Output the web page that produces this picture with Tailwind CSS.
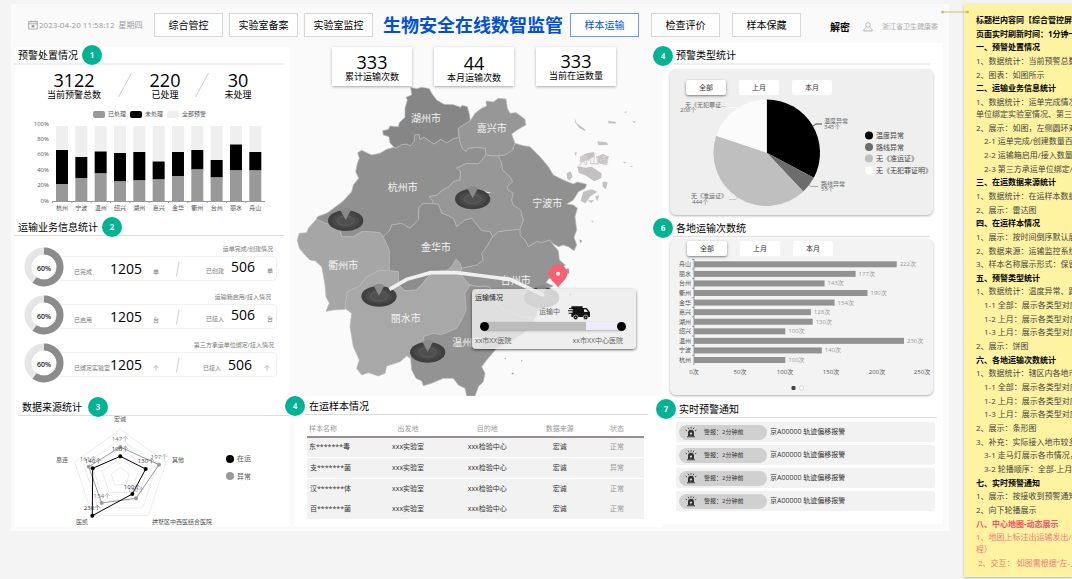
<!DOCTYPE html>
<html lang="zh-CN">
<head>
    <meta charset="UTF-8">
    <meta name="viewport" content="width=device-width, initial-scale=1.0">
    <title>生物安全在线数智监管</title>
    <script src="https://cdn.jsdelivr.net/npm/@tailwindcss/browser@4"></script>
    <style>
        body {
            font-family: 'Open Sans', 'Noto Sans CJK SC', sans-serif;
        }
        svg text {
            dominant-baseline: central;
        }
    </style>
</head>
<body class="bg-[#f4f4f4] flex items-start min-h-screen pl-[11px] pt-1 text-black overflow-hidden">

    <main class="relative flex-1 min-w-0 bg-[#fafafa] pb-1">

        <!-- Header -->
        <header class="flex items-center h-[39px] pt-[3px] pl-[17px] pr-[11px] text-[10px] leading-3 whitespace-nowrap">
            <div class="flex items-center w-[126px] text-[8px] text-[#999]">
                <svg class="w-[10px] h-[10px] mr-px" viewBox="0 0 20 20" fill="none" stroke="#999" stroke-width="1.6">
                    <rect x="1.5" y="3" width="17" height="15" />
                    <path d="M1.5 7.5h17M6 1v4M14 1v4" />
                    <rect x="8" y="11" width="4" height="3" fill="#999" />
                </svg>
                <span>2023-04-20 11:58:12</span>
                <span class="ml-1">星期四</span>
            </div>
            <nav class="flex gap-[6px]">
                <button class="w-[69px] h-6 bg-white border border-[#d7d7d7]">综合管控</button>
                <button class="w-[69px] h-6 bg-white border border-[#d7d7d7]">实验室备案</button>
                <button class="w-[69px] h-6 bg-white border border-[#d7d7d7]">实验室监控</button>
            </nav>
            <h1 class="ml-[10px] text-[18px] leading-6 font-bold text-[#0050d8]">生物安全在线数智监管</h1>
            <nav class="flex gap-3 ml-[7px]">
                <button class="w-[69px] h-6 bg-white border border-[#6f9bee] text-[#0050d8]">样本运输</button>
                <button class="w-[69px] h-6 bg-white border border-[#d7d7d7]">检查评价</button>
                <button class="w-[69px] h-6 bg-white border border-[#d7d7d7]">样本保藏</button>
            </nav>
            <a href="#" class="ml-auto pt-1 font-bold">解密</a>
            <svg class="w-[10px] h-[10px] mt-1 ml-[13px]" viewBox="0 0 20 20" fill="none" stroke="#aaa" stroke-width="1.6">
                <circle cx="10" cy="6" r="4.6" />
                <path d="M6.5 11.5c-3 1-5 3-5 6.500h17c0-3.500-2-5.500-5-6.500" />
            </svg>
            <span class="ml-[9px] pt-1 text-[7px] text-[#aaa]">浙江省卫生健康委</span>
        </header>

        <div class="grid grid-cols-[279px_minmax(0,1fr)_297px]">

            <!-- Left column -->
            <div class="bg-white ml-[3px] mt-1">
                <section>
                    <h2 class="flex items-center h-[18px] ml-0 mr-[6px] pl-1 border-b-2 border-[#efefef] text-[10px] leading-3">
                        预警处置情况
                        <span class="grid place-items-center shrink-0 w-5 h-5 ml-1 rounded-full bg-[#00b392] text-white text-[8px] font-bold">1</span>
                    </h2>
                    <div class="flex items-center h-[39px] pt-px pl-[33px] text-center text-[9px] leading-[11px]">
                        <p class="w-[54px]"><b class="block text-[18px] leading-[18px] font-normal">3122</b>当前预警总数</p>
                        <svg class="w-[14px] h-[26px] ml-[17px]" viewBox="0 0 14 26" stroke="#ccc"><path d="M0.500 25L13.500 1" /></svg>
                        <p class="w-[36px] ml-[15px]"><b class="block text-[18px] leading-[18px] font-normal">220</b>已处理</p>
                        <svg class="w-[14px] h-[26px] ml-[12px]" viewBox="0 0 14 26" stroke="#ccc"><path d="M0.500 25L13.500 1" /></svg>
                        <p class="w-[36px] ml-[11px]"><b class="block text-[18px] leading-[18px] font-normal">30</b>未处理</p>
                    </div>
                    <svg class="block w-full" viewBox="14 104 276 110" font-size="6" fill="#555">
                        <rect x="93" y="111" width="12" height="7" rx="2" fill="#999" />
                        <text x="108" y="114">已处理</text>
                        <rect x="130" y="111" width="12" height="7" rx="2" fill="#000" />
                        <text x="145" y="114">未处理</text>
                        <rect x="167" y="111" width="12" height="7" rx="2" fill="#efefef" />
                        <text x="182" y="114">全部预警</text>
                        <g text-anchor="end">
                            <text x="49" y="124">100%</text>
                            <text x="49" y="139">80%</text>
                            <text x="49" y="154">60%</text>
                            <text x="49" y="170">40%</text>
                            <text x="49" y="185">20%</text>
                            <text x="49" y="201">0%</text>
                        </g>
                        <g id="stack-chart" text-anchor="middle"></g>
                        <path d="M52 201.500H265" stroke="#999" />
                    </svg>
                </section>

                <section class="mt-1">
                    <h2 class="flex items-center h-[18px] mr-[6px] pl-1 border-b border-[#ddd] text-[10px] leading-3">
                        运输业务信息统计
                        <span class="grid place-items-center shrink-0 w-5 h-5 ml-1 rounded-full bg-[#00b392] text-white text-[8px] font-bold">2</span>
                    </h2>
                    <ul class="pt-[7px] pl-[10px] pr-[13px] text-[6px] leading-3 text-[#777] whitespace-nowrap">
                        <li class="flex h-12">
                            <svg class="relative shrink-0 w-10 h-10 mt-1" viewBox="0 0 40 40" fill="none">
                                <circle cx="20" cy="20" r="16" fill="#fff" stroke="#e6e6e6" stroke-width="7" />
                                <circle cx="20" cy="20" r="16" stroke="#8c8c8c" stroke-width="7" pathLength="100" stroke-dasharray="60 40" transform="rotate(-90 20 20)" />
                                <text x="20" y="21" font-size="7" font-weight="600" fill="#222" text-anchor="middle">60%</text>
                            </svg>
                            <div class="flex-1 -ml-2">
                                <p class="text-right pr-1">运单完成/创建情况</p>
                                <div class="grid grid-cols-[36px_43px_23px_30px_25px_36px_1fr] items-center h-[25px] mt-px pl-[17px] border border-[#f0f0f0] rounded">
                                    <span class="pt-[6px]">已完成</span><b class="text-[14px] font-normal text-black">1205</b><span class="pt-[6px]">单</span>
                                    <svg class="w-1 h-4" viewBox="0 0 4 16" stroke="#ccc"><path d="M0.500 15.500L3 0.500" /></svg>
                                    <span class="pt-1">已创建</span><b class="pb-[3px] text-[14px] font-normal text-black">506</b><span class="pt-1">单</span>
                                </div>
                            </div>
                        </li>
                        <li class="flex h-12">
                            <svg class="relative shrink-0 w-10 h-10 mt-1" viewBox="0 0 40 40" fill="none">
                                <circle cx="20" cy="20" r="16" fill="#fff" stroke="#e6e6e6" stroke-width="7" />
                                <circle cx="20" cy="20" r="16" stroke="#8c8c8c" stroke-width="7" pathLength="100" stroke-dasharray="60 40" transform="rotate(-90 20 20)" />
                                <text x="20" y="21" font-size="7" font-weight="600" fill="#222" text-anchor="middle">60%</text>
                            </svg>
                            <div class="flex-1 -ml-2">
                                <p class="text-right pr-[6px]">运输箱启用/接入情况</p>
                                <div class="grid grid-cols-[36px_43px_23px_30px_25px_36px_1fr] items-center h-[25px] mt-px pl-[17px] border border-[#f0f0f0] rounded">
                                    <span class="pt-[6px]">已启用</span><b class="text-[14px] font-normal text-black">1205</b><span class="pt-[6px]">台</span>
                                    <svg class="w-1 h-4" viewBox="0 0 4 16" stroke="#ccc"><path d="M0.500 15.500L3 0.500" /></svg>
                                    <span class="pt-1">已接入</span><b class="pb-[3px] text-[14px] font-normal text-black">506</b><span class="pt-1">台</span>
                                </div>
                            </div>
                        </li>
                        <li class="flex h-12">
                            <svg class="relative shrink-0 w-10 h-10 mt-1" viewBox="0 0 40 40" fill="none">
                                <circle cx="20" cy="20" r="16" fill="#fff" stroke="#e6e6e6" stroke-width="7" />
                                <circle cx="20" cy="20" r="16" stroke="#8c8c8c" stroke-width="7" pathLength="100" stroke-dasharray="60 40" transform="rotate(-90 20 20)" />
                                <text x="20" y="21" font-size="7" font-weight="600" fill="#222" text-anchor="middle">60%</text>
                            </svg>
                            <div class="flex-1 -ml-2">
                                <p class="text-right pr-[3px]">第三方承运单位绑定/接入情况</p>
                                <div class="grid grid-cols-[36px_43px_23px_27px_25px_36px_1fr] items-center h-[25px] mt-px pl-[17px] border border-[#f0f0f0] rounded">
                                    <span class="pt-[6px]">已绑定实验室</span><b class="text-[14px] font-normal text-black">1205</b><span class="pt-[6px]">个</span>
                                    <svg class="w-1 h-4" viewBox="0 0 4 16" stroke="#ccc"><path d="M0.500 15.500L3 0.500" /></svg>
                                    <span class="pt-[6px]">已接入</span><b class="text-[14px] font-normal text-black">506</b><span class="pt-[6px]">个</span>
                                </div>
                            </div>
                        </li>
                    </ul>
                </section>

                <section class="mt-[11px]">
                    <h2 class="flex items-center h-[18px] ml-1 pl-1 border-b border-[#ddd] text-[10px] leading-3">
                        数据来源统计
                        <span class="grid place-items-center shrink-0 w-5 h-5 ml-[6px] rounded-full bg-[#00b392] text-white text-[8px] font-bold">3</span>
                    </h2>
                    <svg class="block w-full" viewBox="14 416 276 109" font-size="6" fill="#555" text-anchor="middle">
                        <g id="radar-grid" fill="none" stroke="#ededed"></g>
                        <path d="M120.300 447L159 464.700L136 498.300L101.700 503L88.700 466.700Z" fill="none" stroke="#999" />
                        <path d="M120.300 456.300L145.700 469L132.300 494L92.300 515.700L92.700 468.300Z" fill="none" stroke="#000" />
                        <g fill="#999">
                            <circle cx="120.300" cy="447" r="2" /><circle cx="159" cy="464.700" r="2" /><circle cx="136" cy="498.300" r="2" /><circle cx="101.700" cy="503" r="2" /><circle cx="88.700" cy="466.700" r="2" />
                        </g>
                        <g fill="#777">
                            <text x="120" y="439">147个</text><text x="159" y="457">197个</text><text x="136" y="490">130个</text><text x="102" y="496">154个</text><text x="88" y="459">161个</text>
                        </g>
                        <g fill="#000">
                            <circle cx="120.300" cy="456.300" r="2" /><circle cx="145.700" cy="469" r="2" /><circle cx="132.300" cy="494" r="2" /><circle cx="92.300" cy="515.700" r="2" /><circle cx="92.700" cy="468.300" r="2" />
                        </g>
                        <g fill="#333">
                            <text x="120" y="449">100个</text><text x="146" y="461">130个</text><text x="132" y="487">100个</text><text x="92" y="508">230个</text><text x="93" y="461">140个</text>
                        </g>
                        <text x="120" y="419">宏诚</text>
                        <text x="178" y="460">其他</text>
                        <text x="62" y="460">易连</text>
                        <text x="82" y="522">医凯</text>
                        <text x="182" y="522">拱墅区中西医结合医院</text>
                        <g font-size="7" text-anchor="start">
                            <circle cx="230" cy="459" r="4" fill="#000" /><text x="237" y="458">在运</text>
                            <circle cx="230" cy="476" r="4" fill="#999" /><text x="237" y="476">异常</text>
                        </g>
                    </svg>
                </section>
            </div>

            <!-- Center column -->
            <div class="flex flex-col">
                <div class="relative flex gap-[22px] h-[43px] pt-1 pl-[42px] text-center text-[9px] leading-3">
                    <p class="w-20 pt-[6px] bg-white shadow-sm shadow-black/25"><b class="block text-[18px] leading-[18px] font-normal">333</b>累计运输次数</p>
                    <p class="w-20 pt-[7px] bg-white shadow-sm shadow-black/25"><b class="block text-[18px] leading-[18px] font-normal">44</b>本月运输次数</p>
                    <p class="w-20 pt-[5px] bg-white shadow-sm shadow-black/25"><b class="block text-[18px] leading-[18px] font-normal">333</b>当前在运数量</p>
                </div>

                <div class="relative">
                    <svg class="block w-full" viewBox="0 258 1086 930">
                        <g stroke="#b8b8b8" stroke-width="2" stroke-linejoin="round">
                            <!-- 杭州 -->
                            <path fill="#909090" d="M312 442L318 444L334 434L350 432L361 437L372 426L374 404L388 404L390 418L402 412L415 420L432 432L452 418L470 428L490 416L508 412L510 425L515 442L527 455L535 445L560 442L586 445L588 464L578 478L565 492L530 490L500 504L512 515L510 540L490 545L478 560L455 572L442 585L418 590L430 605L425 612L400 610L387 622L385 635L385 660L360 685L335 670L305 675L300 690L280 710L270 698L235 695L215 695L190 710L155 710L150 690L130 675L105 670L80 657L82 650L110 640L125 629L160 603L185 575L190 555L206 535L197 515L202 490L208 475L203 458L215 451L230 458L245 465L270 460L290 448Z" />
                            <!-- 湖州 -->
                            <path fill="#868686" d="M362 262L380 266L395 262L418 266L425 280L440 300L462 313L490 314L512 322L516 316L532 320L538 342L541 362L520 375L505 385L506 402L508 412L490 416L470 428L452 418L432 432L415 420L402 412L390 418L388 404L374 404L372 426L361 437L350 432L334 434L318 444L312 442L300 428L297 410L280 405L278 392L295 388L300 378L325 380L328 368L345 352L345 325L352 300L348 292L365 285Z" />
                            <!-- 嘉兴 -->
                            <path fill="#979797" d="M541 362L555 340L575 325L590 318L588 303L610 306L625 295L648 297L652 325L660 340L678 338L705 358L707 375L685 388L665 402L675 430L668 450L645 465L625 468L605 468L588 464L586 445L560 442L535 445L527 455L515 442L510 425L506 402L505 385L520 375Z" />
                            <!-- 绍兴 -->
                            <path fill="#979797" d="M588 464L605 468L625 468L635 490L638 510L660 530L668 545L652 560L655 570L670 580L665 600L670 615L692 630L700 660L690 688L650 692L625 695L608 710L600 695L575 692L565 680L545 655L525 660L500 680L490 655L470 645L455 640L445 612L425 612L430 605L418 590L442 585L455 572L478 560L490 545L510 540L512 515L500 504L530 490L565 492L578 478Z" />
                            <!-- 宁波 -->
                            <path fill="#909090" d="M675 430L700 437L720 440L750 470L775 500L790 525L820 540L850 552L862 546L890 553L885 565L865 575L850 600L830 612L850 615L862 625L855 650L860 690L852 712L860 735L852 752L835 740L820 735L805 740L785 728L780 720L755 728L740 725L715 740L705 720L690 705L690 688L700 660L692 630L670 615L665 600L670 580L655 570L652 560L668 545L660 530L638 510L635 490L625 468L645 465L668 450Z" />
                            <!-- 衢州 -->
                            <path fill="#a6a6a6" d="M80 657L105 670L130 675L150 690L155 710L190 710L215 695L235 695L270 698L280 710L298 750L298 812L265 812L225 835L210 858L172 875L168 900L165 928L130 930L108 934L118 910L108 890L105 855L100 825L95 800L75 782L60 780L45 765L28 745L22 720L28 700L50 698L55 685Z" />
                            <!-- 金华 -->
                            <path fill="#8d8d8d" d="M400 610L445 612L455 640L470 645L490 655L500 680L525 660L545 655L565 680L575 692L600 695L608 710L590 740L575 760L580 780L560 795L515 805L510 790L498 778L485 800L470 812L430 815L410 835L395 855L378 870L345 872L325 855L325 815L298 812L298 750L280 710L300 690L305 675L335 670L360 685L385 660L387 622Z" />
                            <!-- 台州 -->
                            <path fill="#949494" d="M608 710L625 695L650 692L690 688L690 705L705 720L715 740L740 725L755 728L780 720L790 735L805 752L808 780L826 795L812 808L800 822L775 838L768 848L790 858L765 870L750 900L745 930L735 955L700 950L640 930L612 900L600 862L585 858L565 860L540 855L525 840L510 820L515 805L560 795L580 780L575 760L590 740Z" />
                            <!-- 丽水 -->
                            <path fill="#a8a8a8" d="M298 812L325 815L325 855L345 872L378 870L395 855L410 835L430 815L470 812L485 800L498 778L510 790L515 805L510 820L525 840L540 855L525 880L528 930L515 960L500 985L455 1004L430 1000L400 1010L405 1035L375 1045L365 1060L362 1075L350 1068L330 1085L290 1098L285 1120L265 1128L235 1118L215 1125L200 1105L208 1080L190 1040L185 1010L180 980L185 940L165 925L168 900L172 875L210 858L225 835L265 812Z" />
                            <!-- 温州 -->
                            <path fill="#939393" d="M540 855L565 860L585 858L600 862L612 900L640 930L700 950L735 955L720 975L700 1000L660 1025L620 1045L590 1080L575 1100L585 1120L580 1145L565 1160L555 1188L530 1188L525 1165L505 1155L490 1135L460 1135L425 1150L400 1157L395 1143L378 1135L365 1110L362 1075L365 1060L375 1045L405 1035L400 1010L430 1000L455 1004L500 985L515 960L528 930L525 880Z" />
                        </g>
                        <!-- 舟山 -->
                        <g fill="#c2c2c2">
                            <path d="M853 350L860 370L885 388L887 394L868 384L856 368Z" />
                            <path d="M955 362L978 366L976 371L955 370ZM1002 336L1010 334L1008 340ZM1028 362L1040 366L1030 368ZM922 424L950 427L955 434L926 436ZM853 458L860 456L858 468ZM870 470L890 460L912 456L915 468L900 478L872 488ZM918 470L940 462L956 470L950 495L925 490ZM830 520L842 514L848 530L838 542L831 534ZM862 498L885 503L905 500L935 520L934 534L912 544L890 528L866 518ZM938 545L953 546L948 568L938 560ZM880 575L905 568L922 575L900 590L886 610L872 602ZM915 590L928 585L922 604ZM1000 484L1010 488L1002 490ZM1020 498L1028 497L1026 502ZM892 600L912 601L904 609ZM904 662L911 662L907 668Z" />
                            <path fill="#999" d="M868 718L876 722L872 730ZM822 810L836 805L838 820L826 824ZM838 878L845 882L840 892ZM664 1119L672 1118L668 1124ZM643 1075L648 1073L647 1078ZM694 1080L698 1082L694 1085Z" />
                        </g>
                        <g font-size="30" fill="#f2f2f2" text-anchor="middle">
                            <text x="408" y="353">湖州市</text>
                            <text x="605" y="383">嘉兴市</text>
                            <text x="338" y="562">杭州市</text>
                            <text x="557" y="588">绍兴市</text>
                            <text x="772" y="609">宁波市</text>
                            <text x="438" y="742">金华市</text>
                            <text x="160" y="796">衢州市</text>
                            <text x="677" y="839">台州市</text>
                            <text x="347" y="954">丽水市</text>
                            <text x="532" y="1026">温州市</text>
                            <text x="912" y="480" fill="#e6dede" stroke="#d0c8c8">舟山市</text>
                        </g>
                        <defs>
                            <g id="spot">
                                <ellipse rx="53" ry="31" fill="#404040" />
                                <ellipse rx="40" ry="22" fill="#4a4a4a" />
                                <ellipse rx="26" ry="14" fill="#505050" stroke="#666" stroke-width="2" />
                                <path d="M-16 -32Q0 -44 16 -32L0 -2Z" fill="#8a8a8a" />
                            </g>
                        </defs>
                        <use href="#spot" x="548" y="597" />
                        <use href="#spot" x="167" y="662" />
                        <use href="#spot" x="267" y="889" />
                        <use href="#spot" x="413" y="1057" />
                        <use href="#spot" x="755" y="893" />
                        <path d="M298 868L350 838L422 818L500 818L580 828L660 838L762 886" fill="none" stroke="#f0f0f0" stroke-width="11" />
                    </svg>

                    <!-- Transport popup, pinned on the map -->
                    <div class="absolute left-[182px] top-[203px] w-[164px] h-[60px] px-[3px] pt-[3px] rounded bg-[#ececec]/85 shadow shadow-black/50 text-[7px] leading-3 text-[#666]">
                        <p class="text-[#222]">运输情况</p>
                        <div class="flex items-center h-4 pl-16">
                            运输中
                            <svg class="w-[23px] h-[15px] ml-2" viewBox="0 0 69 45">
                                <path d="M10 4H44V9H56L66 22V36H10V26H2V23H14V19H0V16H14V12H3V9H10Z" fill="#111" />
                                <path d="M48 13H54L60 21H48Z" fill="#e4e4e4" />
                                <circle cx="23" cy="37" r="7" fill="#111" stroke="#e4e4e4" stroke-width="2" />
                                <circle cx="53" cy="37" r="7" fill="#111" stroke="#e4e4e4" stroke-width="2" />
                                <circle cx="23" cy="37" r="2" fill="#e4e4e4" /><circle cx="53" cy="37" r="2" fill="#e4e4e4" />
                            </svg>
                        </div>
                        <div class="flex items-center h-3 pl-[5px] pr-[7px]">
                            <span class="w-[9px] h-[9px] -mr-1 rounded-full bg-black z-10"></span>
                            <span class="flex-1 h-2 bg-[#eeecfa] shadow-sm shadow-black/20"><span class="block h-2 bg-[#bcbcbc]" style="width: 74%"></span></span>
                            <span class="w-[9px] h-[9px] -ml-1 rounded-full bg-black z-10"></span>
                        </div>
                        <p class="flex justify-between pt-[3px] pr-[10px]"><span>xx市XX医院</span><span>xx市XX中心医院</span></p>
                    </div>
                    <svg class="absolute left-[258px] top-[178px] w-5 h-6" viewBox="0 0 60 72">
                        <path d="M30 70C22 56 2 46 2 29A28 28 0 0 1 58 29C58 46 38 56 30 70Z" fill="#f8606f" />
                        <circle cx="30" cy="29" r="6" fill="#fff" />
                    </svg>
                </div>

                <section class="relative flex-1 bg-white ml-1 -mr-[10px] pt-px pb-2">
                    <h2 class="flex items-center -ml-[9px] mr-[14px] text-[10px] leading-3">
                        <span class="grid place-items-center shrink-0 w-5 h-5 -my-px rounded-full bg-[#00b392] text-white text-[8px] font-bold">4</span>
                        <span class="flex flex-1 items-center h-[18px] pl-1 border-b border-[#ddd]">在运样本情况</span>
                    </h2>
                    <div class="pl-[13px] pr-[18px] pt-[7px]">
                        <table class="w-full table-fixed border-collapse text-[7px] leading-3 text-center text-[#333]">
                            <thead>
                                <tr class="h-[15px] border-b-2 border-[#969096] text-[#999]">
                                    <th class="w-[19%] pl-[2px] text-left font-normal">样本名称</th>
                                    <th class="w-[22%] font-normal">出发地</th>
                                    <th class="w-[25%] font-normal">目的地</th>
                                    <th class="w-[18%] font-normal">数据来源</th>
                                    <th class="w-[16%] font-normal">状态</th>
                                </tr>
                            </thead>
                            <tbody>
                                <tr class="h-5 bg-[#f2f2f2] border-b border-white"><td class="pl-[2px] text-left">东*******毒</td><td>xxx实验室</td><td>xxx检验中心</td><td>宏诚</td><td class="text-[#999]">正常</td></tr>
                                <tr class="h-[21px] bg-[#f2f2f2] border-b border-white"><td class="pl-[3px] text-left">支*******菌</td><td>xxx实验室</td><td>xxx检验中心</td><td>宏诚</td><td class="text-[#999]">异常</td></tr>
                                <tr class="h-[21px] bg-[#f2f2f2]"><td class="pl-[3px] text-left">汉*******体</td><td>xxx实验室</td><td>xxx检验中心</td><td>宏诚</td><td class="text-[#999]">正常</td></tr>
                                <tr class="h-5 bg-[#f2f2f2]"><td class="pl-[3px] text-left">百*******菌</td><td>xxx实验室</td><td>xxx检验中心</td><td>宏诚</td><td class="text-[#999]">正常</td></tr>
                            </tbody>
                        </table>
                    </div>
                </section>
            </div>

            <!-- Right column -->
            <div class="relative bg-white ml-[10px] mr-[6px] mb-[3px] pt-1">
                <section>
                    <h2 class="flex items-center -ml-[9px] mr-[13px] text-[10px] leading-3">
                        <span class="grid place-items-center shrink-0 w-5 h-5 -my-px rounded-full bg-[#00b392] text-white text-[8px] font-bold">4</span>
                        <span class="flex flex-1 items-center h-[18px] pl-[3px] border-b-2 border-[#efefef]">预警类型统计</span>
                    </h2>
                    <div class="mt-1 ml-2 mr-[10px] pt-[11px] rounded-md bg-[#efefef] shadow-sm shadow-black/25">
                        <div class="flex gap-[13px] pl-4 text-[7px] leading-3 text-[#333]">
                            <button class="w-10 h-[15px] rounded-xs bg-white shadow shadow-black/40">全部</button>
                            <button class="w-10 h-[15px] rounded-xs bg-white">上月</button>
                            <button class="w-10 h-[15px] rounded-xs bg-white">本月</button>
                        </div>
                        <svg class="block w-full" viewBox="670 95 263 120" font-size="6" fill="#666">
                            <path d="M766.700 152.700V99.400A53.300 53.300 0 0 1 813.800 177.700Z" fill="#000" />
                            <path d="M766.700 152.700L813.800 177.700A53.300 53.300 0 0 1 803.300 191.500Z" fill="#6c6c6c" />
                            <path d="M766.700 152.700L803.300 191.500A53.300 53.300 0 0 1 716.200 135.700Z" fill="#bfbfbf" />
                            <path d="M766.700 152.700L716.200 135.700A53.300 53.300 0 0 1 766.700 99.400Z" fill="#fbfbfb" />
                            <g fill="none" stroke-width="0.700">
                                <path d="M813 126L816 124H822" stroke="#000" />
                                <path d="M808 184L811 186.500H818" stroke="#888" />
                                <path d="M738 197L736 199.500H729" stroke="#bbb" />
                                <path d="M738 108L735 107.500H727" stroke="#fff" />
                            </g>
                            <text x="824" y="121">温度异常</text><text x="824" y="127">345个</text>
                            <text x="821" y="184">路线异常</text><text x="821" y="189">55个</text>
                            <text x="691" y="196">无《准运证》</text><text x="692" y="202">444个</text>
                            <text x="685" y="105">无《无犯罪证...</text><text x="680" y="110">208个</text>
                            <g font-size="7" fill="#444">
                                <circle cx="869" cy="135.500" r="4" fill="#000" /><text x="876" y="135">温度异常</text>
                                <circle cx="869" cy="147" r="4" fill="#6c6c6c" /><text x="876" y="147">路线异常</text>
                                <circle cx="869" cy="158.500" r="4" fill="#bfbfbf" /><text x="876" y="158">无《准运证》</text>
                                <circle cx="869" cy="170.500" r="4" fill="#fff" /><text x="876" y="170">无《无犯罪证明》</text>
                            </g>
                        </svg>
                    </div>
                </section>

                <section class="mt-1">
                    <h2 class="flex items-center -ml-[9px] mr-[13px] text-[10px] leading-3">
                        <span class="grid place-items-center shrink-0 w-5 h-5 -my-px rounded-full bg-[#00b392] text-white text-[8px] font-bold">6</span>
                        <span class="flex flex-1 items-center h-[18px] pl-[3px] border-b border-[#ddd]">各地运输次数统</span>
                    </h2>
                    <div class="mt-[2px] ml-2 mr-[10px] pt-[2px] rounded-md bg-[#f3f3f3] shadow-sm shadow-black/25">
                        <div class="flex gap-[13px] pl-[17px] text-[7px] leading-3 text-[#333]">
                            <button class="w-10 h-[15px] rounded-xs bg-white shadow shadow-black/40">全部</button>
                            <button class="w-10 h-[15px] rounded-xs bg-white">上月</button>
                            <button class="w-10 h-[15px] rounded-xs bg-white">本月</button>
                        </div>
                        <svg class="block w-full" viewBox="670 256 263 139" font-size="6" fill="#555">
                            <path d="M694 259V365" stroke="#999" />
                            <g id="city-chart"></g>
                            <g text-anchor="middle">
                                <text x="694" y="372">0次</text><text x="740" y="372">50次</text><text x="785" y="372">100次</text><text x="831" y="372">150次</text><text x="877" y="372">200次</text><text x="922" y="372">250次</text>
                            </g>
                            <rect x="791.500" y="386" width="4" height="4" rx="1" fill="#444" />
                            <rect x="799.500" y="386" width="4" height="4" rx="1.500" fill="#fff" stroke="#ccc" stroke-width="0.700" />
                        </svg>
                    </div>
                </section>

                <section class="mt-[5px] ml-[3px]">
                    <h2 class="flex items-center -ml-[9px] mr-[6px] text-[10px] leading-3">
                        <span class="grid place-items-center shrink-0 w-5 h-5 -my-px rounded-full bg-[#00b392] text-white text-[8px] font-bold">7</span>
                        <span class="flex flex-1 items-center h-[18px] pl-[3px] border-b border-[#ddd]">实时预警通知</span>
                    </h2>
                    <svg class="hidden">
                        <symbol id="alarm" viewBox="0 0 36 36">
                            <path d="M9 30V20a9 9 0 0 1 18 0v10ZM6 31h24v3H6Z" fill="#333" />
                            <path d="M18 3v5M9 5l3 5M27 5l-3 5M2 12l4 3M34 12l-4 3" stroke="#333" stroke-width="2.500" fill="none" />
                            <path d="M19 17l-5 7h3l-1 5 6-7h-3Z" fill="#eee" />
                        </symbol>
                    </svg>
                    <ul class="flex flex-col gap-[3px] mt-1 ml-[11px] mr-2 text-[7px] leading-3 text-[#333] whitespace-nowrap">
                        <li class="flex items-center h-5 pl-[3px] rounded-xs bg-[#f2f2f2]">
                            <span class="flex items-center w-[88px] h-[15px] pl-[6px] mr-[3px] rounded-full bg-[#d0d0d0] text-[6px]"><svg class="w-3 h-3 mr-[7px]"><use href="#alarm" /></svg>警报：2分钟前</span>
                            京A00000 轨迹偏移报警
                        </li>
                        <li class="flex items-center h-5 pl-[3px] rounded-xs bg-[#f2f2f2]">
                            <span class="flex items-center w-[88px] h-[15px] pl-[6px] mr-[3px] rounded-full bg-[#d0d0d0] text-[6px]"><svg class="w-3 h-3 mr-[7px]"><use href="#alarm" /></svg>警报：2分钟前</span>
                            京A00000 轨迹偏移报警
                        </li>
                        <li class="flex items-center h-5 pl-[3px] rounded-xs bg-[#f2f2f2]">
                            <span class="flex items-center w-[88px] h-[15px] pl-[6px] mr-[3px] rounded-full bg-[#d0d0d0] text-[6px]"><svg class="w-3 h-3 mr-[7px]"><use href="#alarm" /></svg>警报：2分钟前</span>
                            京A00000 轨迹偏移报警
                        </li>
                        <li class="flex items-center h-5 pl-[3px] rounded-xs bg-[#f2f2f2]">
                            <span class="flex items-center w-[88px] h-[15px] pl-[6px] mr-[3px] rounded-full bg-[#d0d0d0] text-[6px]"><svg class="w-3 h-3 mr-[7px]"><use href="#alarm" /></svg>警报：2分钟前</span>
                            京A00000 轨迹偏移报警
                        </li>
                    </ul>
                </section>
            </div>
        </div>

        <!-- Connector to the note -->
        <svg class="absolute -right-5 top-[6px] w-7 h-1 z-10" viewBox="0 0 28 4" fill="#cbbf72">
            <path d="M1 2H27" stroke="#cbbf72" />
            <circle cx="1.500" cy="2" r="1.500" /><circle cx="26.500" cy="2" r="1.500" />
        </svg>
    </main>

    <!-- Note -->
    <aside class="flex flex-col justify-between shrink-0 w-[108px] h-[calc(100vh-6px)] ml-[15px] pt-[10px] pb-2 pl-3 bg-[#fff3a1] shadow shadow-black/20 text-[8px] leading-3 text-[#444] whitespace-nowrap overflow-hidden">
        <p class="font-bold text-black">标题栏内容同【综合管控屏】</p>
        <p class="font-bold text-black">页面实时刷新时间：1分钟一次</p>
        <h3 class="font-bold text-black">一、预警处置情况</h3>
        <p>1、数据统计：当前预警总数</p>
        <p>2、图表：如图所示</p>
        <h3 class="font-bold text-black">二、运输业务信息统计</h3>
        <p>1、数据统计：运单完成情况、<br>单位绑定实验室情况、第三方</p>
        <p>2、展示：如图，左侧圆环对应</p>
        <p class="pl-2">2-1 运单完成/创建数量百分比</p>
        <p class="pl-2">2-2 运输箱启用/接入数量百分比</p>
        <p class="pl-2">2-3 第三方承运单位绑定/接入</p>
        <h3 class="font-bold text-black">三、在运数据来源统计</h3>
        <p>1、数据统计：在运样本数据</p>
        <p>2、展示：雷达图</p>
        <h3 class="font-bold text-black">四、在运样本情况</h3>
        <p>1、展示：按时间倒序默认展示</p>
        <p>2、数据来源：运输监控系统</p>
        <p>3、样本名称展示形式：保留</p>
        <h3 class="font-bold text-black">五、预警类型统计</h3>
        <p>1、数据统计：温度异常、路线</p>
        <p class="pl-2">1-1 全部：展示各类型对应</p>
        <p class="pl-2">1-2 上月：展示各类型对应</p>
        <p class="pl-2">1-3 上月：展示各类型对应</p>
        <p>2、展示：饼图</p>
        <h3 class="font-bold text-black">六、各地运输次数统计</h3>
        <p>1、数据统计：辖区内各地市</p>
        <p class="pl-2">1-1 全部：展示各类型对应</p>
        <p class="pl-2">1-2 上月：展示各类型对应</p>
        <p class="pl-2">1-3 上月：展示各类型对应</p>
        <p>2、展示：条形图</p>
        <p>3、补充：实际接入地市较多</p>
        <p class="pl-2">3-1 走马灯展示各市情况，</p>
        <p class="pl-2">3-2 轮播顺序：全部-上月-本月</p>
        <h3 class="font-bold text-black">七、实时预警通知</h3>
        <p>1、展示：按接收到预警通知</p>
        <p>2、向下轮播展示</p>
        <h3 class="font-bold text-[#f0506a]">八、中心地图-动态展示</h3>
        <p class="text-[#f07a7a]">1、地图上标注出运输发出/接收<br>程）</p>
        <p class="pl-[2px] text-[#f07a7a]">2、交互： 如图需根据“左-上</p>
    </aside>

    <script>
        // [city, top of "已处理", top of "未处理"]
        const stackData = [
            ['杭州', 184, 150], ['宁波', 178, 157], ['温州', 173.5, 151.5], ['绍兴', 181.5, 153],
            ['湖州', 180.5, 152], ['嘉兴', 179.5, 161.5], ['金华', 176, 152], ['衢州', 169.5, 150],
            ['台州', 177.5, 160], ['丽水', 170.5, 144.5], ['舟山', 170.5, 152]
        ];
        const cityData = [
            ['舟山', 222], ['丽水', 177], ['台州', 143], ['衢州', 190], ['金华', 154], ['嘉兴', 128],
            ['湖州', 130], ['绍兴', 100], ['温州', 230], ['宁波', 140], ['杭州', 100]
        ];

        document.getElementById('stack-chart').innerHTML = stackData.map(([city, done, todo], i) => {
            const x = 56 + i * 19.33;
            return `<rect x="${x}" y="126" width="12" height="${todo - 126}" fill="#efefef" />
                <rect x="${x}" y="${todo}" width="12" height="${done - todo}" fill="#000" />
                <rect x="${x}" y="${done}" width="12" height="${201 - done}" fill="#999" />
                <path d="M${x - 3.5} 201v2" stroke="#999" />
                <text x="${x + 6}" y="208">${city}</text>`;
        }).join('');

        document.getElementById('city-chart').innerHTML = cityData.map(([city, count], i) => {
            const y = 264.3 + i * 9.57;
            const w = count * 0.913;
            return `<rect x="694" y="${y - 3}" width="${w}" height="6" fill="#929292" />
                <path d="M692 ${y - 4.8}h2" stroke="#999" />
                <text x="691" y="${y}" text-anchor="end">${city}</text>
                <text x="${694 + w + 3}" y="${y}" fill="#999">${count}次</text>`;
        }).join('');

        // Radar rings, five levels
        document.getElementById('radar-grid').innerHTML = [1, 2, 3, 4, 5].map(level => {
            const points = [0, 1, 2, 3, 4].map(k => {
                const a = k * Math.PI * 2 / 5;
                return (120.3 + Math.sin(a) * level * 9.56) + ',' + (477 - Math.cos(a) * level * 9.56);
            });
            return `<polygon points="${points.join(' ')}" />`;
        }).join('');
    </script>
</body>
</html>
